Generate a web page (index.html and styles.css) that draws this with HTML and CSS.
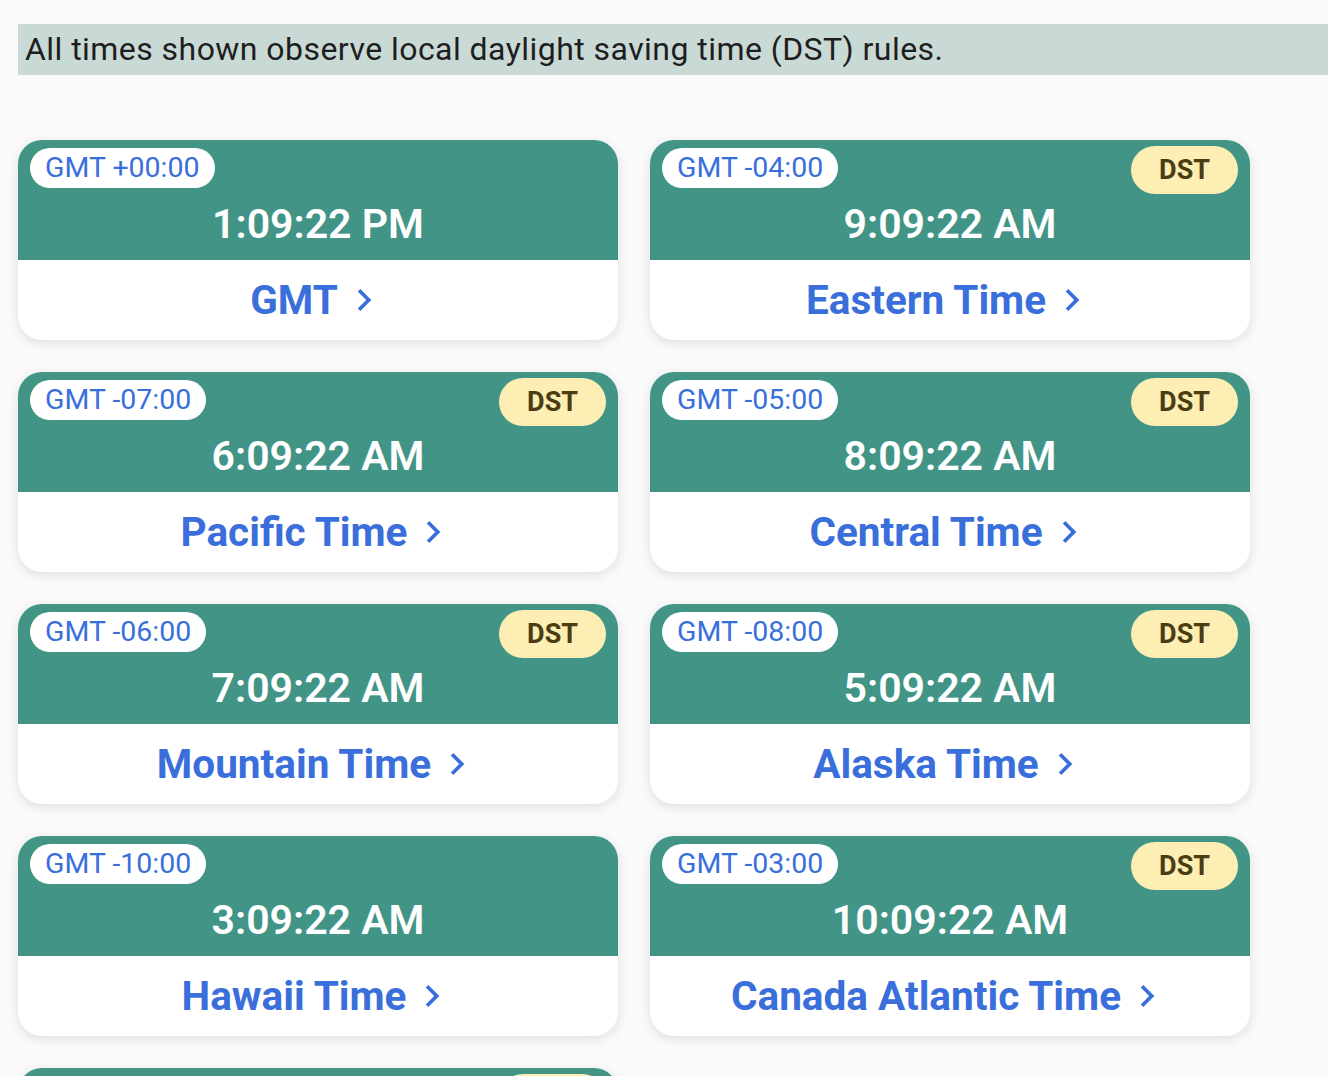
FILE: index.html
```html
<!DOCTYPE html>
<html lang="en">
<head>
<meta charset="utf-8">
<title>Time zones</title>
<link rel="stylesheet" href="styles.css">
</head>
<body>
<div class="page">
  <div class="banner">All times shown observe local daylight saving time (DST) rules.</div>
  <div class="grid">
    <div class="card">
      <div class="head">
        <div class="pills"><span class="offset">GMT +00:00</span></div>
        <div class="time">1:09:22 PM</div>
      </div>
      <div class="name"><span>GMT</span><svg class="chev" viewBox="0 0 24 24"><path d="M8.59 16.59L13.17 12 8.59 7.41 10 6l6 6-6 6-1.41-1.41z"/></svg></div>
    </div>
    <div class="card">
      <div class="head">
        <div class="pills"><span class="offset">GMT -04:00</span><span class="dst">DST</span></div>
        <div class="time">9:09:22 AM</div>
      </div>
      <div class="name"><span>Eastern Time</span><svg class="chev" viewBox="0 0 24 24"><path d="M8.59 16.59L13.17 12 8.59 7.41 10 6l6 6-6 6-1.41-1.41z"/></svg></div>
    </div>
    <div class="card">
      <div class="head">
        <div class="pills"><span class="offset">GMT -07:00</span><span class="dst">DST</span></div>
        <div class="time">6:09:22 AM</div>
      </div>
      <div class="name"><span>Pacific Time</span><svg class="chev" viewBox="0 0 24 24"><path d="M8.59 16.59L13.17 12 8.59 7.41 10 6l6 6-6 6-1.41-1.41z"/></svg></div>
    </div>
    <div class="card">
      <div class="head">
        <div class="pills"><span class="offset">GMT -05:00</span><span class="dst">DST</span></div>
        <div class="time">8:09:22 AM</div>
      </div>
      <div class="name"><span>Central Time</span><svg class="chev" viewBox="0 0 24 24"><path d="M8.59 16.59L13.17 12 8.59 7.41 10 6l6 6-6 6-1.41-1.41z"/></svg></div>
    </div>
    <div class="card">
      <div class="head">
        <div class="pills"><span class="offset">GMT -06:00</span><span class="dst">DST</span></div>
        <div class="time">7:09:22 AM</div>
      </div>
      <div class="name"><span>Mountain Time</span><svg class="chev" viewBox="0 0 24 24"><path d="M8.59 16.59L13.17 12 8.59 7.41 10 6l6 6-6 6-1.41-1.41z"/></svg></div>
    </div>
    <div class="card">
      <div class="head">
        <div class="pills"><span class="offset">GMT -08:00</span><span class="dst">DST</span></div>
        <div class="time">5:09:22 AM</div>
      </div>
      <div class="name"><span>Alaska Time</span><svg class="chev" viewBox="0 0 24 24"><path d="M8.59 16.59L13.17 12 8.59 7.41 10 6l6 6-6 6-1.41-1.41z"/></svg></div>
    </div>
    <div class="card">
      <div class="head">
        <div class="pills"><span class="offset">GMT -10:00</span></div>
        <div class="time">3:09:22 AM</div>
      </div>
      <div class="name"><span>Hawaii Time</span><svg class="chev" viewBox="0 0 24 24"><path d="M8.59 16.59L13.17 12 8.59 7.41 10 6l6 6-6 6-1.41-1.41z"/></svg></div>
    </div>
    <div class="card">
      <div class="head">
        <div class="pills"><span class="offset">GMT -03:00</span><span class="dst">DST</span></div>
        <div class="time">10:09:22 AM</div>
      </div>
      <div class="name"><span>Canada Atlantic Time</span><svg class="chev" viewBox="0 0 24 24"><path d="M8.59 16.59L13.17 12 8.59 7.41 10 6l6 6-6 6-1.41-1.41z"/></svg></div>
    </div>
    <div class="card">
      <div class="head">
        <div class="pills"><span class="offset">GMT -02:30</span><span class="dst">DST</span></div>
        <div class="time">10:39:22 AM</div>
      </div>
      <div class="name"><span>Newfoundland Time</span><svg class="chev" viewBox="0 0 24 24"><path d="M8.59 16.59L13.17 12 8.59 7.41 10 6l6 6-6 6-1.41-1.41z"/></svg></div>
    </div>
  </div>
</div>
</body>
</html>
```
FILE: styles.css
```css
html, body {
  margin: 0;
  padding: 0;
  background: #fafafa;
  font-family: Roboto, "Liberation Sans", sans-serif;
  overflow: hidden;
}

.page {
  padding: 24px 0 0 18px;
}

.banner {
  background: #c9d9d5;
  color: #1e1e1e;
  font-size: 32px;
  letter-spacing: 0.45px;
  line-height: 51px;
  height: 51px;
  padding-left: 7px;
  white-space: nowrap;
}

.grid {
  display: grid;
  grid-template-columns: 600px 600px;
  column-gap: 32px;
  row-gap: 32px;
  margin-top: 65px;
}

.card {
  background: #ffffff;
  border-radius: 24px;
  overflow: hidden;
  box-shadow: 0 3px 12px rgba(0, 0, 0, 0.11);
  height: 200px;
}

.head {
  background: #429586;
  height: 120px;
  box-sizing: border-box;
  padding: 8px 12px 0 12px;
}

.pills {
  display: flex;
  justify-content: space-between;
  align-items: flex-start;
  height: 40px;
}

.offset {
  background: #ffffff;
  color: #3a6fdb;
  font-size: 28.5px;
  height: 40px;
  line-height: 40px;
  padding: 0 15px;
  border-radius: 20px;
}

.dst {
  background: #fdeeb3;
  color: #4b3d13;
  font-size: 27px;
  font-weight: 700;
  height: 48px;
  line-height: 48px;
  padding: 0 28px;
  border-radius: 24px;
  margin-top: -2px;
}

.time {
  color: #ffffff;
  font-size: 41px;
  font-weight: 600;
  line-height: 48px;
  text-align: center;
  margin-top: 12px;
}

.name {
  height: 80px;
  display: flex;
  align-items: center;
  justify-content: center;
  gap: 4px;
  color: #3a6fdb;
  font-size: 40.5px;
  font-weight: 700;
  line-height: 80px;
}

.chev {
  width: 44px;
  height: 44px;
  fill: #3a6fdb;
  flex: none;
}
```
